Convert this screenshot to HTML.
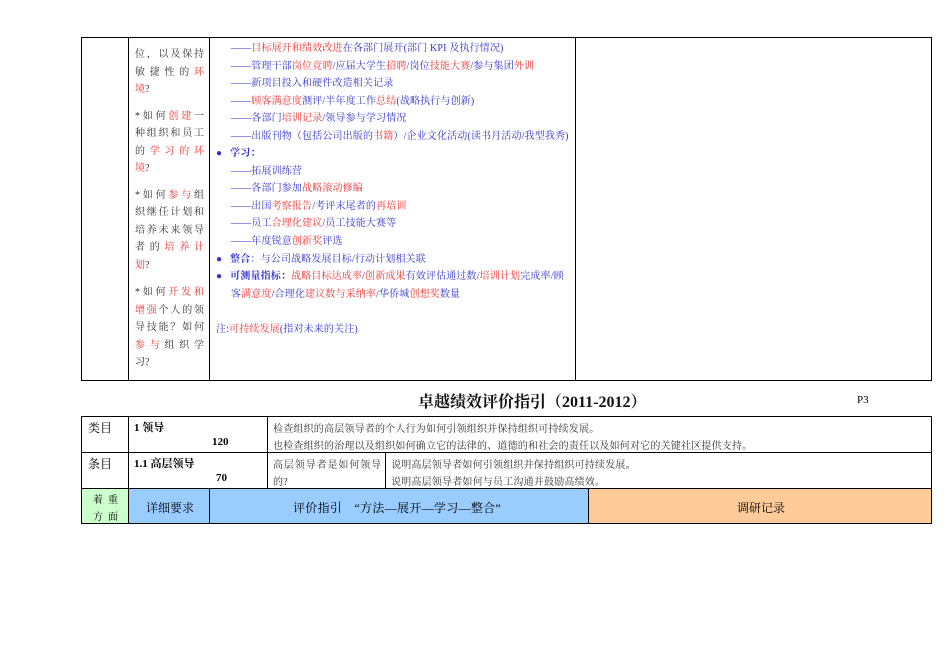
<!DOCTYPE html>
<html><head><meta charset="utf-8"><style>
body{margin:0;width:950px;height:672px;background:#fff;position:relative;font-family:"Liberation Serif","Noto Serif CJK SC",serif;overflow:hidden}
.a{position:absolute;white-space:nowrap}
.l{position:absolute;background:#000}
.t{font-size:10px;color:#3333cc;left:231px;letter-spacing:0.15px}
.r{color:#ee3333}
.b{font-weight:bold}
.lc{position:absolute;left:135px;width:69px;font-size:10px;color:#333;text-align:justify;text-align-last:justify;height:14px;line-height:14px}
.s{font-size:10px;color:#333;letter-spacing:0.2px}
</style></head><body>
<div class="l" style="left:81px;top:37px;width:851px;height:1px"></div>
<div class="l" style="left:81px;top:380px;width:851px;height:1px"></div>
<div class="l" style="left:81px;top:37px;width:1px;height:344px"></div>
<div class="l" style="left:128px;top:37px;width:1px;height:344px"></div>
<div class="l" style="left:209px;top:37px;width:1px;height:344px"></div>
<div class="l" style="left:575px;top:37px;width:1px;height:344px"></div>
<div class="l" style="left:931px;top:37px;width:1px;height:344px"></div>

<div class="lc" style="top:48px">位，以及保持</div>
<div class="lc" style="top:66px">敏捷性的<span class="r">环</span></div>
<div class="lc" style="top:83px;text-align-last:left"><span class="r">境</span>?</div>
<div class="lc" style="top:110px">*如何<span class="r">创建</span>一</div>
<div class="lc" style="top:127px">种组织和员工</div>
<div class="lc" style="top:145px">的<span class="r">学习的环</span></div>
<div class="lc" style="top:162px;text-align-last:left"><span class="r">境</span>?</div>
<div class="lc" style="top:189px">*如何<span class="r">参与</span>组</div>
<div class="lc" style="top:206px">织继任计划和</div>
<div class="lc" style="top:224px">培养未来领导</div>
<div class="lc" style="top:241px">者的<span class="r">培养计</span></div>
<div class="lc" style="top:259px;text-align-last:left"><span class="r">划</span>?</div>
<div class="lc" style="top:286px">*如何<span class="r">开发和</span></div>
<div class="lc" style="top:304px"><span class="r">增强</span>个人的领</div>
<div class="lc" style="top:321px">导技能？如何</div>
<div class="lc" style="top:339px"><span class="r">参与</span>组织学</div>
<div class="lc" style="top:356px;text-align-last:left">习?</div>

<div class="a t" style="top:39px">——<span class="r">目标展开和绩效改进</span>在各部门展开(部门 KPI 及执行情况)</div>
<div class="a t" style="top:57px">——管理干部<span class="r">岗位竞聘</span>/应届大学生<span class="r">招聘</span>/岗位<span class="r">技能大赛</span>/参与集团<span class="r">外训</span></div>
<div class="a t" style="top:74px">——新项目投入和硬件改造相关记录</div>
<div class="a t" style="top:92px">——<span class="r">顾客满意度</span>测评/半年度工作<span class="r">总结</span>(战略执行与创新)</div>
<div class="a t" style="top:109px">——各部门<span class="r">培训记录</span>/领导参与学习情况</div>
<div class="a t" style="top:127px">——出版刊物（包括公司出版的<span class="r">书籍</span>）/企业文化活动(读书月活动/我型我秀)</div>
<div class="a t b" style="top:144px;left:216px">●&nbsp;&nbsp; 学习：</div>
<div class="a t" style="top:162px">——拓展训练营</div>
<div class="a t" style="top:179px">——各部门参加<span class="r">战略滚动修编</span></div>
<div class="a t" style="top:197px">——出国<span class="r">考察报告</span>/考评末尾者的<span class="r">再培训</span></div>
<div class="a t" style="top:214px">——员工<span class="r">合理化建议</span>/员工技能大赛等</div>
<div class="a t" style="top:232px">——年度锐意<span class="r">创新奖</span>评选</div>
<div class="a t" style="top:250px;left:216px"><b>●&nbsp;&nbsp; 整合</b>：与公司战略发展目标/行动计划相关联</div>
<div class="a t" style="top:267px;left:216px"><b>●&nbsp;&nbsp; 可测量指标：</b><span class="r">战略目标达成率</span>/<span class="r">创新成果</span>有效评估通过数/<span class="r">培训计划</span>完成率/顾</div>
<div class="a t" style="top:285px;left:231px">客<span class="r">满意度</span>/合理化<span class="r">建议数与采纳率</span>/华侨城<span class="r">创想奖</span>数量</div>
<div class="a t" style="top:320px;left:216px">注:<span class="r">可持续发展</span>(指对未来的关注)</div>

<div class="a b" style="top:389px;left:418px;font-size:16px;color:#111">卓越绩效评价指引（2011-2012）</div>
<div class="a" style="top:394px;left:857px;font-size:11px">P3</div>

<div class="a" style="left:129px;top:489px;width:80px;height:34px;background:#99ccff"></div>
<div class="a" style="left:210px;top:489px;width:378px;height:34px;background:#99ccff"></div>
<div class="a" style="left:589px;top:489px;width:342px;height:34px;background:#ffcc99"></div>
<div class="a" style="left:82px;top:489px;width:46px;height:34px;background:#ccffcc"></div>
<div class="l" style="left:81px;top:416px;width:851px;height:1px"></div>
<div class="l" style="left:81px;top:452px;width:851px;height:1px"></div>
<div class="l" style="left:81px;top:488px;width:851px;height:1px"></div>
<div class="l" style="left:81px;top:523px;width:851px;height:1px"></div>
<div class="l" style="left:81px;top:416px;width:1px;height:108px"></div>
<div class="l" style="left:931px;top:416px;width:1px;height:108px"></div>
<div class="l" style="left:128px;top:416px;width:1px;height:108px"></div>
<div class="l" style="left:267px;top:416px;width:1px;height:72px"></div>
<div class="l" style="left:385px;top:452px;width:1px;height:36px"></div>
<div class="l" style="left:209px;top:488px;width:1px;height:36px"></div>
<div class="l" style="left:588px;top:488px;width:1px;height:36px"></div>

<div class="a" style="left:88px;top:419px;font-size:12px">类目</div>
<div class="a b" style="left:134px;top:419px;font-size:11px">1 领导</div>
<div class="a b" style="left:212px;top:436px;font-size:11px">120</div>
<div class="a s" style="left:273px;top:420px">检查组织的高层领导者的个人行为如何引领组织并保持组织可持续发展。</div>
<div class="a s" style="left:273px;top:437px">也检查组织的治理以及组织如何确立它的法律的、道德的和社会的责任以及如何对它的关键社区提供支持。</div>
<div class="a" style="left:88px;top:455px;font-size:12px">条目</div>
<div class="a b" style="left:134px;top:455px;font-size:11px">1.1 高层领导</div>
<div class="a b" style="left:216px;top:472px;font-size:11px">70</div>
<div class="a s" style="left:273px;top:456px;letter-spacing:0.9px">高层领导者是如何领导</div>
<div class="a s" style="left:273px;top:473px">的?</div>
<div class="a s" style="left:391px;top:456px">说明高层领导者如何引领组织并保持组织可持续发展。</div>
<div class="a s" style="left:391px;top:473px">说明高层领导者如何与员工沟通并鼓励高绩效。</div>
<div class="a" style="left:93px;top:491px;font-size:10px;letter-spacing:5px">着重</div>
<div class="a" style="left:93px;top:508px;font-size:10px;letter-spacing:5px">方面</div>
<div class="a" style="left:146px;top:499px;font-size:12px">详细要求</div>
<div class="a" style="left:293px;top:499px;font-size:12px;letter-spacing:0.3px">评价指引　“方法—展开—学习—整合”</div>
<div class="a" style="left:737px;top:499px;font-size:12px">调研记录</div>
</body></html>
